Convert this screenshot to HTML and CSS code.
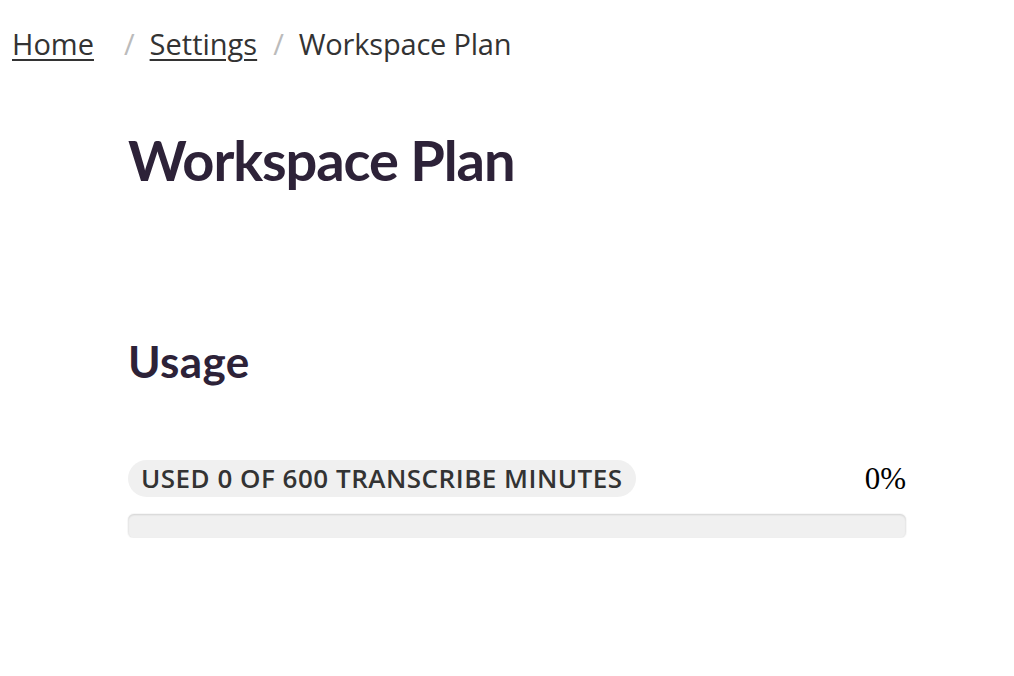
FILE: index.html
```html
<!DOCTYPE html>
<html>
<head>
<meta charset="utf-8">
<link rel="stylesheet" href="styles.css">
</head>
<body>
<nav class="crumbs">
  <a href="#" class="crumb home">Home</a>
  <span class="sep">/</span>
  <a href="#" class="crumb settings">Settings</a>
  <span class="sep">/</span>
  <span class="current">Workspace Plan</span>
</nav>
<main class="content">
  <h1 class="title">Workspace Plan</h1>
  <h2 class="section">Usage</h2>
  <div class="usage-head">
    <span class="pill">Used 0 of 600 Transcribe Minutes</span>
    <span class="pct">0%</span>
  </div>
  <div class="bar"><div class="fill" style="width:0%"></div></div>
</main>
</body>
</html>
```
FILE: styles.css
```css
html, body { margin: 0; padding: 0; background: #fff; }
body { font-family: "Open Sans", sans-serif; color: #333; }
.crumbs {
  display: flex;
  align-items: baseline;
  padding: 24px 0 0 12px;
  font-size: 29px;
  line-height: 40px;
}
.crumb { color: #333; text-decoration: underline; text-underline-offset: 4px; text-decoration-thickness: 2px; }
.home { margin-right: 30px; }
.settings { margin-right: 16px; }
.sep { color: #bbb; margin-right: 15px; }
.current { color: #333; letter-spacing: -0.2px; }
.content { width: 778px; margin-left: 128px; }
.title {
  font-family: "Lato", sans-serif;
  font-weight: 700;
  font-size: 56px;
  letter-spacing: -1.1px;
  color: #2d2238;
  margin: 64px 0 0;
  line-height: 64px;
}
.section {
  font-family: "Lato", sans-serif;
  font-weight: 700;
  font-size: 44px;
  letter-spacing: 0.4px;
  color: #2d2238;
  margin: 142px 0 0;
  line-height: 54px;
}
.usage-head { display: flex; justify-content: space-between; align-items: center; margin-top: 72px; }
.pill {
  background: #f0f0f0;
  border-radius: 19px;
  padding: 0 13px;
  height: 37px;
  line-height: 37px;
  text-transform: uppercase;
  font-weight: 600;
  font-size: 26px;
  letter-spacing: 0.5px;
  color: #333;
}
.pct { font-family: "Liberation Serif", serif; font-size: 31px; color: #000; line-height: 34px; }
.bar {
  margin-top: 17px;
  height: 24px;
  background: #f0f0f0;
  border-radius: 6px;
  box-shadow: inset 0 1px 2px rgba(0,0,0,0.12), 0 0 0 1px rgba(0,0,0,0.03);
  overflow: hidden;
}
.fill { height: 100%; background: #5b3ea8; }
```
